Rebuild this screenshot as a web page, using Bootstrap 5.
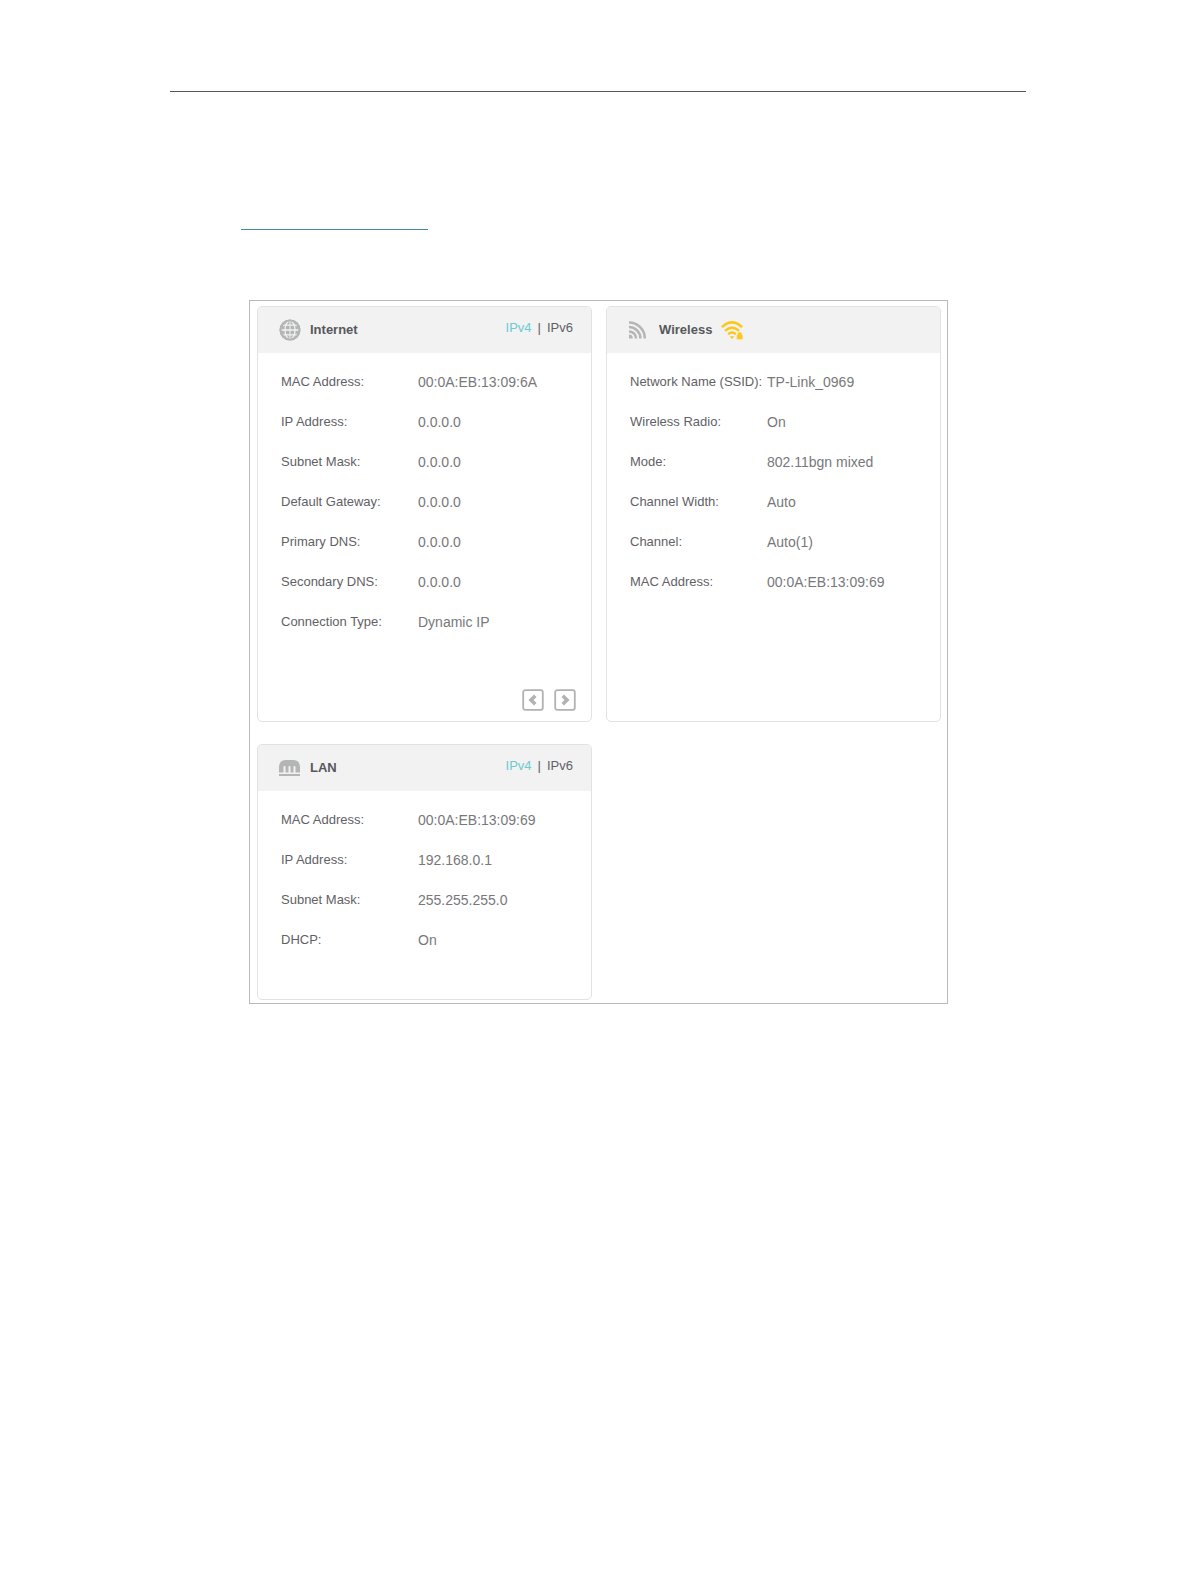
<!DOCTYPE html>
<html lang="en">
<head>
<meta charset="utf-8">
<meta name="viewport" content="width=device-width, initial-scale=1">
<title>Network Status</title>
<link href="https://cdn.jsdelivr.net/npm/bootstrap@5.3.0/dist/css/bootstrap.min.css" rel="stylesheet">
<style>
  body { font-family: "Liberation Sans", Arial, sans-serif; font-size: 13px; line-height: 20px; color: #5f6166; background: #fff; }
  .sheet { padding: 0 170px; }
  .sheet-head { height: 92px; border-bottom: 1px solid #58585a; }
  .sheet-link { height: 138px; width: 187px; margin-left: 71px; border-bottom: 1px solid #438b9a; }
  .status-frame { margin: 70px 78px 60px 79px; padding: 5px 6px 3px 7px; border: 1px solid #b9b9b9; }
  .status-grid { --bs-gutter-x: 14px; --bs-gutter-y: 22px; }
  .panel { border: 1px solid #e2e2e2; border-radius: 5px; --bs-card-inner-border-radius: 4px; }
  .panel-head { height: 46px; gap: 9px; padding: 0 18px 0 21px; background: #f2f2f2; border: 0; }
  .panel-title { font-size: 13px; line-height: 20px; font-weight: 700; color: #56585c; }
  .panel-icon { width: 22px; height: 22px; flex: none; }
  .proto { gap: 6px; }
  .proto a { color: #5f6166; text-decoration: none; }
  .proto a.current { color: #6ccbd0; }
  .panel-rows { padding: 9px 8px 0 23px; }
  .panel-rows dt { width: 137px; flex: none; font-weight: 400; white-space: nowrap; }
  .panel-rows dd { font-size: 14px; color: #77787b; }
  .panel-rows dt, .panel-rows dd { line-height: 40px; margin: 0; }
  .panel-foot { height: 79px; gap: 10px; padding: 0 15px 10px; }
  .lan-foot { height: 39px; }
  .pager-btn { width: 22px; height: 22px; }
</style>
</head>
<body>
<div class="sheet">
  <header class="sheet-head"></header>
  <div class="sheet-link"></div>

  <main class="status-frame">
    <div class="row status-grid">
      <div class="col-6">
        <section class="card panel h-100">
          <div class="card-header panel-head d-flex align-items-center">
            <svg class="panel-icon" viewBox="0 0 22 22" aria-hidden="true">
              <circle cx="11" cy="11" r="10.5" fill="#b4b5b5"/>
              <g fill="none" stroke="#f2f2f2" stroke-width="1.3">
                <ellipse cx="11" cy="11" rx="5" ry="9"/>
                <path d="M2 11h18M4 6.2h14M4 15.8h14"/>
                <path d="M11 2v18" stroke-width="1"/>
              </g>
              <circle cx="11" cy="11" r="9.5" fill="none" stroke="#b4b5b5" stroke-width="2"/>
            </svg>
            <h2 class="panel-title mb-0">Internet</h2>
            <nav class="proto d-flex ms-auto mb-1" aria-label="Internet protocol"><a class="current" href="#">IPv4</a><span>|</span><a href="#">IPv6</a></nav>
          </div>
          <dl class="panel-rows mb-0">
            <div class="d-flex"><dt>MAC Address:</dt><dd>00:0A:EB:13:09:6A</dd></div>
            <div class="d-flex"><dt>IP Address:</dt><dd>0.0.0.0</dd></div>
            <div class="d-flex"><dt>Subnet Mask:</dt><dd>0.0.0.0</dd></div>
            <div class="d-flex"><dt>Default Gateway:</dt><dd>0.0.0.0</dd></div>
            <div class="d-flex"><dt>Primary DNS:</dt><dd>0.0.0.0</dd></div>
            <div class="d-flex"><dt>Secondary DNS:</dt><dd>0.0.0.0</dd></div>
            <div class="d-flex"><dt>Connection Type:</dt><dd>Dynamic IP</dd></div>
          </dl>
          <div class="panel-foot d-flex justify-content-end align-items-end">
            <button type="button" class="pager-btn btn p-0 border-0 d-flex" aria-label="Previous">
              <svg width="22" height="22" viewBox="0 0 22 22"><rect x="1.2" y="1.2" width="19.6" height="19.6" rx="2" fill="#fff" stroke="#b2b2b2" stroke-width="1.8"/><path d="M13.3 6.8 9 11l4.3 4.2" fill="none" stroke="#b2b2b2" stroke-width="3.6"/></svg>
            </button>
            <button type="button" class="pager-btn btn p-0 border-0 d-flex" aria-label="Next">
              <svg width="22" height="22" viewBox="0 0 22 22"><rect x="1.2" y="1.2" width="19.6" height="19.6" rx="2" fill="#fff" stroke="#b2b2b2" stroke-width="1.8"/><path d="M8.7 6.8 13 11l-4.3 4.2" fill="none" stroke="#b2b2b2" stroke-width="3.6"/></svg>
            </button>
          </div>
        </section>
      </div>

      <div class="col-6">
        <section class="card panel h-100">
          <div class="card-header panel-head d-flex align-items-center">
            <svg class="panel-icon" viewBox="0 0 22 22" aria-hidden="true">
              <g fill="none" stroke="#b4b5b5" stroke-width="2.5">
                <path d="M1 3.6A15.8 15.8 0 0 1 16.8 19.4M1 8A11.4 11.4 0 0 1 12.4 19.4M1 12.4A7 7 0 0 1 8 19.4"/>
              </g>
              <path d="M1 15.6a3.8 3.8 0 0 1 3.8 3.8H1z" fill="#b4b5b5"/>
            </svg>
            <h2 class="panel-title mb-0">Wireless</h2>
            <svg class="panel-icon" viewBox="0 0 22 22" role="img" aria-label="Secured wireless">
              <g fill="none" stroke="#fbc91c" stroke-width="2.5">
                <path d="M.8 8.2Q11-1.400 21.200 8.200M4 11.800q7-6.400 14 0M7.200 15.200q3.800-3.400 7.600 0"/>
              </g>
              <path d="M8.600 17.200h4.800L11 20z" fill="#fbc91c"/>
              <path d="M15.600 16h.8v-.8a2.300 2.300 0 0 1 4.600 0v.8h.8v4.600h-6.200z" fill="#fbc91c" stroke="#f2f2f2" stroke-width=".4"/>
            </svg>
          </div>
          <dl class="panel-rows mb-0">
            <div class="d-flex"><dt>Network Name (SSID):</dt><dd>TP-Link_0969</dd></div>
            <div class="d-flex"><dt>Wireless Radio:</dt><dd>On</dd></div>
            <div class="d-flex"><dt>Mode:</dt><dd>802.11bgn mixed</dd></div>
            <div class="d-flex"><dt>Channel Width:</dt><dd>Auto</dd></div>
            <div class="d-flex"><dt>Channel:</dt><dd>Auto(1)</dd></div>
            <div class="d-flex"><dt>MAC Address:</dt><dd>00:0A:EB:13:09:69</dd></div>
          </dl>
        </section>
      </div>

      <div class="col-6">
        <section class="card panel h-100">
          <div class="card-header panel-head d-flex align-items-center">
            <svg class="panel-icon" viewBox="0 0 22 22" aria-hidden="true">
              <path d="M0 15.500V9.500Q.5 3 7 3h7q6.500 0 7 6.500v6z" fill="#b4b5b5"/>
              <path d="M5.500 15.500V10M10.500 15.500V10M15.500 15.500V10" stroke="#f2f2f2" stroke-width="2" stroke-linecap="round"/>
              <path d="M0 17h21v2H0z" fill="#b4b5b5"/>
            </svg>
            <h2 class="panel-title mb-0">LAN</h2>
            <nav class="proto d-flex ms-auto mb-1" aria-label="LAN protocol"><a class="current" href="#">IPv4</a><span>|</span><a href="#">IPv6</a></nav>
          </div>
          <dl class="panel-rows mb-0">
            <div class="d-flex"><dt>MAC Address:</dt><dd>00:0A:EB:13:09:69</dd></div>
            <div class="d-flex"><dt>IP Address:</dt><dd>192.168.0.1</dd></div>
            <div class="d-flex"><dt>Subnet Mask:</dt><dd>255.255.255.0</dd></div>
            <div class="d-flex"><dt>DHCP:</dt><dd>On</dd></div>
          </dl>
          <div class="lan-foot"></div>
        </section>
      </div>
    </div>
  </main>
</div>
<script src="https://cdn.jsdelivr.net/npm/bootstrap@5.3.0/dist/js/bootstrap.bundle.min.js"></script>
</body>
</html>
